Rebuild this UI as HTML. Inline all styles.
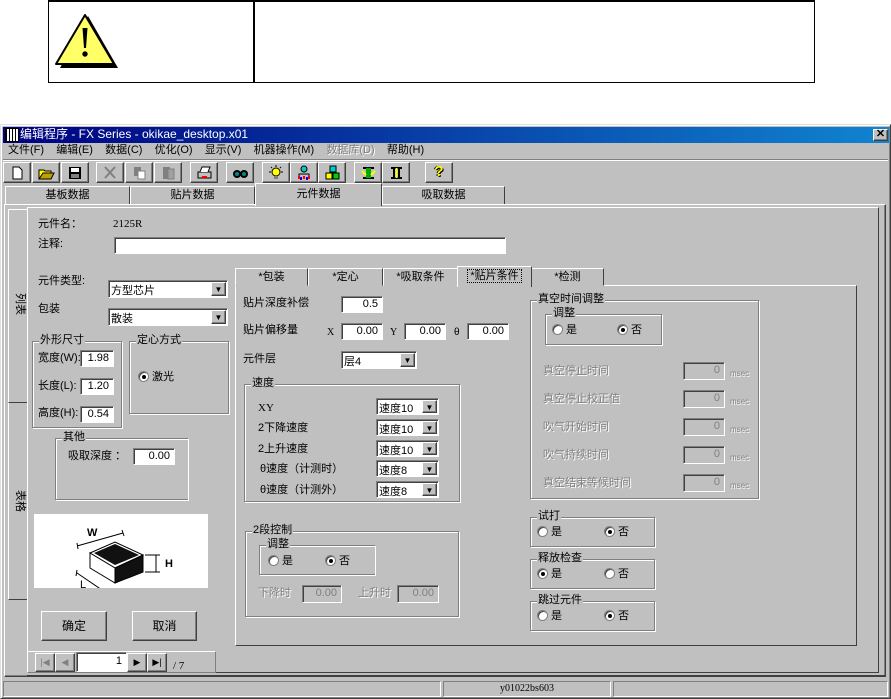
<!DOCTYPE html>
<html><head><meta charset="utf-8"><style>
*{box-sizing:border-box;margin:0;padding:0}
body{width:891px;height:699px;position:relative;background:#fff;overflow:hidden;font-family:"Liberation Sans","WenQuanYi Zen Hei",sans-serif;font-size:11px;color:#000}
.a{position:absolute}
.t{position:absolute;white-space:nowrap;font-size:11px;line-height:13px}
.raised{border:1px solid;border-color:#fff #404040 #404040 #fff;box-shadow:inset -1px -1px 0 #808080;background:#c0c0c0}
.sunk{border:1px solid;border-color:#808080 #fff #fff #808080;box-shadow:inset 1px 1px 0 #404040;background:#fff}
.grp{position:absolute;border:1px solid #808080;box-shadow:1px 1px 0 #fff,inset 1px 1px 0 #fff}
.grp>span{position:absolute;top:-8px;left:6px;background:#c0c0c0;padding:0 1px;font-size:11px;line-height:13px}
.inp{position:absolute;text-align:right;padding-right:4px;font-size:11px;line-height:14px}
.sel{position:absolute}
.sel b{position:absolute;right:1px;top:1px;bottom:1px;width:15px;font-weight:normal;font-size:8px;text-align:center;line-height:13px}
.sel i{font-style:normal;position:absolute;left:2px;top:1px}
.rad{display:inline-block;width:11px;height:11px;border-radius:50%;background:#fff;border:1px solid #808080;box-shadow:inset 1px 1px 0 #404040;vertical-align:-2px;position:relative;margin-right:3px}
.rad.on:after{content:"";position:absolute;left:3px;top:3px;width:4px;height:4px;border-radius:50%;background:#000}
.tb{position:absolute;top:162px;width:28px;height:21px}
.dis{color:#808080;text-shadow:1px 1px 0 #fff}
.tab{position:absolute;height:19px;border:1px solid;border-color:#fff #404040 transparent #fff;text-align:center;line-height:17px;background:#c0c0c0}
.vt{position:absolute;writing-mode:vertical-rl;text-orientation:sideways;font-size:11px;white-space:nowrap}
</style></head><body>
<!-- warning box -->
<div class="a" style="left:48px;top:0;width:767px;height:83px;border:1px solid #000;border-top:2px solid #000"></div>
<div class="a" style="left:253px;top:0;width:2px;height:83px;background:#000"></div>
<svg class="a" style="left:54px;top:12px" width="66" height="58" viewBox="0 0 66 58"><path d="M34 4 L64 56 L6 56 Z" fill="#000"/><path d="M31 3 L60 52 L2 52 Z" fill="#ffff66" stroke="#000" stroke-width="2" stroke-linejoin="round"/><path d="M28.5 16 L33.5 16 L32 36 L30 36 Z" fill="#000"/><circle cx="31" cy="42" r="2.7" fill="#000"/></svg>
<!-- window -->
<div class="a" style="left:0;top:124px;width:891px;height:575px;background:#c0c0c0;border:1px solid;border-color:#dfdfdf #404040 #404040 #dfdfdf;box-shadow:inset 1px 1px 0 #fff,inset -1px -1px 0 #808080"></div>
<div class="a" style="left:3px;top:127px;width:886px;height:16px;background:linear-gradient(90deg,#000080,#1084d0)"></div>
<div class="a" style="left:5px;top:128px;width:14px;height:14px;background:#fff;border:1px solid #000;background-image:repeating-linear-gradient(90deg,#000 0 1px,#fff 1px 3px)"></div>
<div class="t" style="left:20px;top:128px;color:#fff;font-size:12px">编辑程序 - FX Series - okikae_desktop.x01</div>
<div class="a raised" style="left:873px;top:129px;width:15px;height:12px;font-size:11px;line-height:9px;text-align:center;font-weight:bold">✕</div>
<div class="t" style="left:8px;top:144px">文件(F)&nbsp;&nbsp;&nbsp; 编辑(E)&nbsp;&nbsp;&nbsp; 数据(C)&nbsp;&nbsp;&nbsp; 优化(O)&nbsp;&nbsp;&nbsp; 显示(V)&nbsp;&nbsp;&nbsp; 机器操作(M)&nbsp;&nbsp;&nbsp; <span class="dis">数据库(D)</span>&nbsp;&nbsp;&nbsp; 帮助(H)</div>
<div class="a" style="left:3px;top:159px;width:885px;height:1px;background:#808080;box-shadow:0 1px 0 #fff"></div>
<div class="tb raised" style="left:3px"><svg width="26" height="19"><path d="M9 4h6l3 3v9H9z" fill="#fff" stroke="#000"/></svg></div>
<div class="tb raised" style="left:32px"><svg width="26" height="19"><path d="M6 7h5l1 1h6v8H6z" fill="#ff0" stroke="#000"/><path d="M6 16l4-6h11l-3 6z" fill="#c0a000" stroke="#000"/></svg></div>
<div class="tb raised" style="left:61px"><svg width="26" height="19"><rect x="7" y="4" width="12" height="12" fill="#000"/><rect x="9" y="5" width="8" height="4" fill="#fff"/><rect x="9" y="11" width="8" height="4" fill="#808080"/></svg></div>
<div class="tb raised" style="left:96px"><svg width="26" height="19"><path d="M8 4l10 11M18 4L8 15" stroke="#808080" stroke-width="2"/></svg></div>
<div class="tb raised" style="left:125px"><svg width="26" height="19"><rect x="8" y="4" width="7" height="9" fill="#808080"/><rect x="12" y="8" width="7" height="8" fill="#fff" stroke="#808080"/></svg></div>
<div class="tb raised" style="left:154px"><svg width="26" height="19"><rect x="8" y="4" width="7" height="12" fill="#808080"/><rect x="13" y="6" width="6" height="10" fill="#a0a0a0" stroke="#808080"/></svg></div>
<div class="tb raised" style="left:190px"><svg width="26" height="19"><rect x="7" y="9" width="13" height="6" fill="#c0c0c0" stroke="#000"/><path d="M9 9l2-5h8l-2 5" fill="#fff" stroke="#000"/><rect x="11" y="13" width="5" height="2" fill="red"/></svg></div>
<div class="tb raised" style="left:226px"><svg width="26" height="19"><circle cx="10" cy="11" r="4" fill="#000"/><circle cx="17" cy="11" r="4" fill="#000"/><circle cx="10" cy="11" r="2" fill="#088"/><circle cx="17" cy="11" r="2" fill="#088"/></svg></div>
<div class="tb raised" style="left:262px"><svg width="26" height="19"><circle cx="13" cy="9" r="4" fill="#ff0" stroke="#000"/><rect x="11" y="13" width="4" height="3" fill="#808080"/><path d="M6 9h2M18 9h2M13 2v2M8 4l1 1M18 4l-1 1" stroke="#000"/></svg></div>
<div class="tb raised" style="left:290px"><svg width="26" height="19"><circle cx="13" cy="6" r="3" fill="#0cc" stroke="#000"/><path d="M8 16v-5h10v5" fill="none" stroke="#000"/><path d="M8 13v3M13 13v3M18 13v3" stroke="red" stroke-width="2"/><path d="M10 14v3M16 14v3" stroke="#00f" stroke-width="2"/></svg></div>
<div class="tb raised" style="left:318px"><svg width="26" height="19"><rect x="11" y="3" width="6" height="6" fill="#0cc" stroke="#000"/><rect x="7" y="10" width="6" height="6" fill="#ff0" stroke="#000"/><rect x="14" y="10" width="6" height="6" fill="#0c0" stroke="#000"/></svg></div>
<div class="tb raised" style="left:354px"><svg width="26" height="19"><rect x="8" y="4" width="11" height="2" fill="#000"/><rect x="8" y="14" width="11" height="2" fill="#000"/><rect x="11" y="5" width="5" height="10" fill="#0a0"/><path d="M7 8l4 4M20 8l-4 4" stroke="#ff0" stroke-width="2"/></svg></div>
<div class="tb raised" style="left:382px"><svg width="26" height="19"><rect x="8" y="4" width="11" height="2" fill="#000"/><rect x="8" y="14" width="11" height="2" fill="#000"/><rect x="10" y="5" width="2" height="10" fill="#000"/><rect x="15" y="5" width="2" height="10" fill="#000"/><path d="M13.5 5v10" stroke="#ff0" stroke-width="2"/></svg></div>
<div class="tb raised" style="left:425px;text-align:center;font-weight:bold;font-size:15px;line-height:18px;color:#ff0;text-shadow:1px 1px 0 #000,-1px 0 0 #000">?</div>
<!-- top tabs -->
<div class="tab" style="left:5px;top:186px;width:125px">基板数据</div>
<div class="tab" style="left:130px;top:186px;width:125px">贴片数据</div>
<div class="tab" style="left:382px;top:186px;width:123px">吸取数据</div>
<!-- main panel -->
<div class="a" style="left:4px;top:204px;width:882px;height:473px;border:1px solid;border-color:#fff #404040 #404040 #fff;box-shadow:inset -1px -1px 0 #808080"></div>
<div class="tab" style="left:255px;top:183px;width:127px;height:23px;border-bottom:none;line-height:21px">元件数据</div>
<!-- vertical tabs -->
<div class="a" style="left:8px;top:209px;width:20px;height:194px;border:1px solid;border-color:#fff #404040 #404040 #fff;border-right:none"></div>
<div class="vt" style="left:13px;top:293px">列表</div>
<div class="a" style="left:8px;top:403px;width:20px;height:197px;border-left:1px solid #fff;border-bottom:1px solid #404040"></div>
<div class="vt" style="left:13px;top:490px">表格</div>
<!-- inner content panel -->
<div class="a" style="left:27px;top:207px;width:852px;height:466px;border:1px solid;border-color:#fff #404040 #404040 #fff"></div>
<div class="t" style="left:38px;top:218px">元件名：</div>
<div class="t" style="left:113px;top:218px;font-family:'Liberation Serif',serif">2125R</div>
<div class="t" style="left:38px;top:238px">注释:</div>
<div class="a sunk" style="left:114px;top:237px;width:392px;height:17px"></div>
<div class="t" style="left:38px;top:275px">元件类型:</div>
<div class="sel sunk" style="left:108px;top:280px;width:120px;height:18px"><i>方型芯片</i><b class="raised">▼</b></div>
<div class="t" style="left:38px;top:303px">包装</div>
<div class="sel sunk" style="left:108px;top:308px;width:120px;height:18px"><i>散装</i><b class="raised">▼</b></div>
<div class="grp" style="left:32px;top:341px;width:90px;height:87px"><span>外形尺寸</span></div>
<div class="t" style="left:38px;top:352px">宽度(W):</div>
<div class="inp sunk" style="left:80px;top:350px;width:34px;height:17px">1.98</div>
<div class="t" style="left:38px;top:380px">长度(L):</div>
<div class="inp sunk" style="left:80px;top:378px;width:34px;height:17px">1.20</div>
<div class="t" style="left:38px;top:407px">高度(H):</div>
<div class="inp sunk" style="left:80px;top:406px;width:34px;height:17px">0.54</div>
<div class="grp" style="left:129px;top:341px;width:100px;height:73px"><span>定心方式</span></div>
<div class="t" style="left:138px;top:371px"><span class="rad on"></span>激光</div>
<div class="grp" style="left:55px;top:438px;width:133px;height:62px;border-right:none"><span>其他</span></div>
<div class="t" style="left:68px;top:450px">吸取深度 ：</div>
<div class="inp sunk" style="left:133px;top:448px;width:42px;height:17px">0.00</div>
<div class="a" style="left:34px;top:514px;width:174px;height:74px;background:#fff"></div>
<svg class="a" style="left:34px;top:514px" width="174" height="74"><path d="M43 32l46-13M43 29l1 6M88 16l2 6" stroke="#000" fill="none"/><path d="M56 39L81 28L109 41L81 54Z" fill="#fff" stroke="#000"/><path d="M60 39L81 30L105 41L81 51Z" fill="#111"/><path d="M56 39L81 54V69L56 54Z" fill="#fff" stroke="#000"/><path d="M81 54L109 41V58L81 69Z" fill="#111" stroke="#000"/><path d="M111 41h15M111 58h15M122 41v17" stroke="#000"/><path d="M43 59l25 17M43 56l-1 6" stroke="#000"/><text x="53" y="22" font-size="11" font-weight="bold" font-family="Liberation Sans">W</text><text x="131" y="53" font-size="11" font-weight="bold" font-family="Liberation Sans">H</text><text x="46" y="74" font-size="11" font-family="Liberation Sans">L</text></svg>
<div class="a raised" style="left:41px;top:611px;width:66px;height:30px;text-align:center;line-height:28px;font-size:12px">确定</div>
<div class="a raised" style="left:132px;top:611px;width:65px;height:30px;text-align:center;line-height:28px;font-size:12px">取消</div>
<!-- nav bar -->
<div class="a" style="left:27px;top:651px;width:189px;height:22px;border:1px solid;border-color:#fff #808080 #808080 #fff"></div>
<div class="a raised" style="left:35px;top:653px;width:20px;height:19px;color:#808080;text-align:center;line-height:17px;font-size:9px">|◀</div>
<div class="a raised" style="left:55px;top:653px;width:20px;height:19px;color:#808080;text-align:center;line-height:17px;font-size:9px">◀</div>
<div class="inp sunk" style="left:76px;top:652px;width:51px;height:20px;line-height:16px">1</div>
<div class="a raised" style="left:127px;top:653px;width:20px;height:19px;text-align:center;line-height:17px;font-size:9px">▶</div>
<div class="a raised" style="left:147px;top:653px;width:20px;height:19px;text-align:center;line-height:17px;font-size:9px">▶|</div>
<div class="t" style="left:173px;top:660px;font-family:'Liberation Serif',serif">/ 7</div>
<div class="a" style="left:27px;top:675px;width:859px;height:2px;background:#404040"></div>
<!-- inner tab panel -->
<div class="a" style="left:235px;top:285px;width:622px;height:361px;border:1px solid;border-color:#fff #404040 #404040 #fff"></div>
<div class="tab" style="left:235px;top:268px;width:73px;height:18px;line-height:16px">*包装</div>
<div class="tab" style="left:308px;top:268px;width:75px;height:18px;line-height:16px">*定心</div>
<div class="tab" style="left:383px;top:268px;width:75px;height:18px;line-height:16px">*吸取条件</div>
<div class="tab" style="left:531px;top:268px;width:73px;height:18px;line-height:16px">*检测</div>
<div class="tab" style="left:457px;top:266px;width:75px;height:21px;line-height:18px;border-bottom:none"><span style="outline:1px dotted #000;padding:0 2px">*贴片条件</span></div>
<div class="t" style="left:243px;top:297px">贴片深度补偿</div>
<div class="inp sunk" style="left:341px;top:296px;width:42px;height:17px">0.5</div>
<div class="t" style="left:243px;top:324px">贴片偏移量</div>
<div class="t" style="left:327px;top:326px;font-family:'Liberation Serif',serif;font-size:10px">X</div>
<div class="inp sunk" style="left:341px;top:323px;width:42px;height:17px">0.00</div>
<div class="t" style="left:390px;top:326px;font-family:'Liberation Serif',serif;font-size:10px">Y</div>
<div class="inp sunk" style="left:404px;top:323px;width:42px;height:17px">0.00</div>
<div class="t" style="left:454px;top:326px;font-size:10px">θ</div>
<div class="inp sunk" style="left:467px;top:323px;width:42px;height:17px">0.00</div>
<div class="t" style="left:243px;top:353px">元件层</div>
<div class="sel sunk" style="left:341px;top:351px;width:76px;height:18px"><i>层4</i><b class="raised">▼</b></div>
<div class="grp" style="left:244px;top:384px;width:216px;height:118px"><span>速度</span></div>
<div class="t" style="left:258px;top:402px;font-family:'Liberation Serif',serif">XY</div>
<div class="t" style="left:258px;top:422px">2下降速度</div>
<div class="t" style="left:258px;top:443px">2上升速度</div>
<div class="t" style="left:260px;top:463px">θ速度（计测时）</div>
<div class="t" style="left:260px;top:484px">θ速度（计测外）</div>
<div class="sel sunk" style="left:376px;top:398px;width:63px;height:17px"><i>速度10</i><b class="raised">▼</b></div>
<div class="sel sunk" style="left:376px;top:419px;width:63px;height:17px"><i>速度10</i><b class="raised">▼</b></div>
<div class="sel sunk" style="left:376px;top:440px;width:63px;height:17px"><i>速度10</i><b class="raised">▼</b></div>
<div class="sel sunk" style="left:376px;top:460px;width:63px;height:17px"><i>速度8</i><b class="raised">▼</b></div>
<div class="sel sunk" style="left:376px;top:481px;width:63px;height:17px"><i>速度8</i><b class="raised">▼</b></div>
<div class="grp" style="left:245px;top:531px;width:214px;height:86px"><span>2段控制</span></div>
<div class="grp" style="left:259px;top:545px;width:116px;height:30px;border-right:none"><span>调整</span></div>
<div class="t" style="left:268px;top:555px"><span class="rad"></span>是<span style="display:inline-block;width:32px"></span><span class="rad on"></span>否</div>
<div class="t dis" style="left:258px;top:587px">下降时</div>
<div class="inp sunk" style="left:302px;top:585px;width:40px;height:18px;color:#808080;background:#c0c0c0">0.00</div>
<div class="t dis" style="left:358px;top:587px">上升时</div>
<div class="inp sunk" style="left:397px;top:585px;width:42px;height:18px;color:#808080;background:#c0c0c0">0.00</div>
<!-- right column -->
<div class="grp" style="left:530px;top:300px;width:229px;height:199px"><span>真空时间调整</span></div>
<div class="grp" style="left:545px;top:314px;width:117px;height:31px"><span>调整</span></div>
<div class="t" style="left:552px;top:324px"><span class="rad"></span>是<span style="display:inline-block;width:40px"></span><span class="rad on"></span>否</div>
<div class="t dis" style="left:543px;top:365px">真空停止时间</div>
<div class="t dis" style="left:543px;top:393px">真空停止校正值</div>
<div class="t dis" style="left:543px;top:421px">吹气开始时间</div>
<div class="t dis" style="left:543px;top:449px">吹气持续时间</div>
<div class="t dis" style="left:543px;top:477px">真空结束等候时间</div>
<div class="inp sunk" style="left:683px;top:362px;width:42px;height:18px;color:#808080;background:#c0c0c0">0</div>
<div class="inp sunk" style="left:683px;top:390px;width:42px;height:18px;color:#808080;background:#c0c0c0">0</div>
<div class="inp sunk" style="left:683px;top:418px;width:42px;height:18px;color:#808080;background:#c0c0c0">0</div>
<div class="inp sunk" style="left:683px;top:446px;width:42px;height:18px;color:#808080;background:#c0c0c0">0</div>
<div class="inp sunk" style="left:683px;top:474px;width:42px;height:18px;color:#808080;background:#c0c0c0">0</div>
<div class="t dis" style="left:730px;top:367px;font-size:8px">msec</div>
<div class="t dis" style="left:730px;top:395px;font-size:8px">msec</div>
<div class="t dis" style="left:730px;top:423px;font-size:8px">msec</div>
<div class="t dis" style="left:730px;top:451px;font-size:8px">msec</div>
<div class="t dis" style="left:730px;top:479px;font-size:8px">msec</div>
<div class="grp" style="left:530px;top:517px;width:125px;height:30px"><span>试打</span></div>
<div class="t" style="left:537px;top:526px"><span class="rad"></span>是<span style="display:inline-block;width:42px"></span><span class="rad on"></span>否</div>
<div class="grp" style="left:530px;top:559px;width:125px;height:30px"><span>释放检查</span></div>
<div class="t" style="left:537px;top:568px"><span class="rad on"></span>是<span style="display:inline-block;width:42px"></span><span class="rad"></span>否</div>
<div class="grp" style="left:530px;top:601px;width:125px;height:30px"><span>跳过元件</span></div>
<div class="t" style="left:537px;top:610px"><span class="rad"></span>是<span style="display:inline-block;width:42px"></span><span class="rad on"></span>否</div>
<!-- status bar -->
<div class="a" style="left:3px;top:681px;width:438px;height:16px;border:1px solid;border-color:#808080 #fff #fff #808080"></div>
<div class="a" style="left:443px;top:681px;width:168px;height:16px;border:1px solid;border-color:#808080 #fff #fff #808080;text-align:center;line-height:14px;font-family:'Liberation Serif',serif;font-size:10px">y01022bs603</div>
<div class="a" style="left:613px;top:681px;width:275px;height:16px;border:1px solid;border-color:#808080 #fff #fff #808080"></div>
</body></html>
